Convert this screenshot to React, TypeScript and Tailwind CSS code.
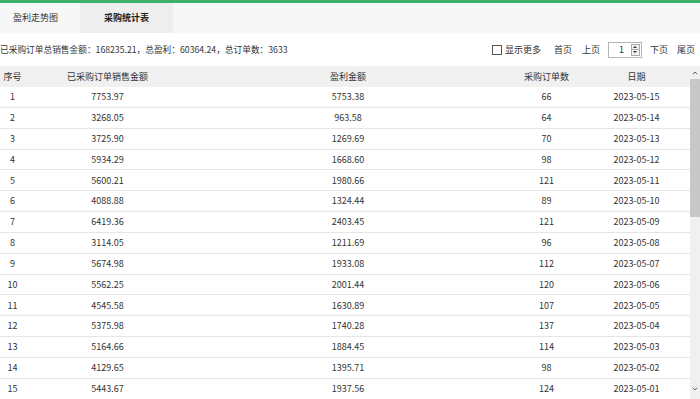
import { ChevronUp, ChevronDown } from 'lucide-react';

const rows = [
  [1, '7753.97', '5753.38', 66, '2023-05-15'],
  [2, '3268.05', '963.58', 64, '2023-05-14'],
  [3, '3725.90', '1269.69', 70, '2023-05-13'],
  [4, '5934.29', '1668.60', 98, '2023-05-12'],
  [5, '5600.21', '1980.66', 121, '2023-05-11'],
  [6, '4088.88', '1324.44', 89, '2023-05-10'],
  [7, '6419.36', '2403.45', 121, '2023-05-09'],
  [8, '3114.05', '1211.69', 96, '2023-05-08'],
  [9, '5674.98', '1933.08', 112, '2023-05-07'],
  [10, '5562.25', '2001.44', 120, '2023-05-06'],
  [11, '4545.58', '1630.89', 107, '2023-05-05'],
  [12, '5375.98', '1740.28', 137, '2023-05-04'],
  [13, '5164.66', '1884.45', 114, '2023-05-03'],
  [14, '4129.65', '1395.71', 98, '2023-05-02'],
  [15, '5443.67', '1937.56', 124, '2023-05-01'],
];

const cols = 'grid grid-cols-[25px_165px_316px_81px_99px_1fr] items-center';

export default function App() {
  return (
    <div
      className="w-[700px] h-[399px] overflow-hidden bg-white text-[9px] text-[#333]"
      style={{ fontFamily: '"Noto Sans CJK SC", "Noto Sans", sans-serif' }}
    >
      {/* 顶部绿色条 */}
      <div className="h-[3px] bg-[#3fb068]" />

      {/* 标签页 */}
      <div className="flex h-[30px] bg-[#f7f7f7]">
        <div className="flex w-[80px] items-center pl-[13px]">盈利走势图</div>
        <div className="flex w-[93px] items-center justify-center bg-[#eeeeee] font-semibold text-[#222]">
          采购统计表
        </div>
      </div>

      {/* 汇总与分页 */}
      <div className="flex h-[33px] items-center justify-between pr-[5px]">
        <div className="text-[8.7px]">已采购订单总销售金额：168235.21，总盈利：60364.24，总订单数：3633</div>
        <div className="flex items-center">
          <span className="mr-[3px] h-[10px] w-[10px] border border-[#555] bg-white" />
          <span>显示更多</span>
          <span className="ml-[13px]">首页</span>
          <span className="ml-[10px]">上页</span>
          <div className="ml-[8px] flex h-[16px] w-[34px] items-center border border-[#b5b5b5] bg-white">
            <span className="flex-1 pl-[10px]">1</span>
            <div className="mr-[1px] flex h-[12px] w-[9px] flex-col border border-[#aaa] bg-[#f0f0f0]">
              <div className="flex flex-1 items-center justify-center border-b border-[#aaa]">
                <span className="h-0 w-0 border-x-[2px] border-b-[2px] border-x-transparent border-b-[#333]" />
              </div>
              <div className="flex flex-1 items-center justify-center">
                <span className="h-0 w-0 border-x-[2px] border-t-[2px] border-x-transparent border-t-[#333]" />
              </div>
            </div>
          </div>
          <span className="ml-[8px]">下页</span>
          <span className="ml-[9px]">尾页</span>
        </div>
      </div>

      {/* 表格 */}
      <div className="flex">
        <div className="w-[690px]">
          <div className={`${cols} h-[21px] bg-[#f0f0f0] text-center`}>
            <div>序号</div>
            <div>已采购订单销售金额</div>
            <div>盈利金额</div>
            <div>采购订单数</div>
            <div>日期</div>
            <div />
          </div>
          {rows.map((r) => (
            <div key={r[0]} className={`${cols} h-[20.85px] border-b border-[#e6e6e6] text-center`}>
              <div>{r[0]}</div>
              <div>{r[1]}</div>
              <div>{r[2]}</div>
              <div>{r[3]}</div>
              <div>{r[4]}</div>
              <div />
            </div>
          ))}
        </div>

        {/* 滚动条 */}
        <div className="flex h-[333px] w-[10px] flex-col bg-[#f0f0f0]">
          <div className="flex h-[13px] items-center justify-center">
            <ChevronUp className="h-[8px] w-[8px] text-[#666]" strokeWidth={3} />
          </div>
          <div className="h-[138px] bg-[#c8c8c8]" />
          <div className="flex-1" />
          <div className="flex h-[14px] items-start justify-center">
            <ChevronDown className="h-[8px] w-[8px] text-[#666]" strokeWidth={3} />
          </div>
        </div>
      </div>
    </div>
  );
}
